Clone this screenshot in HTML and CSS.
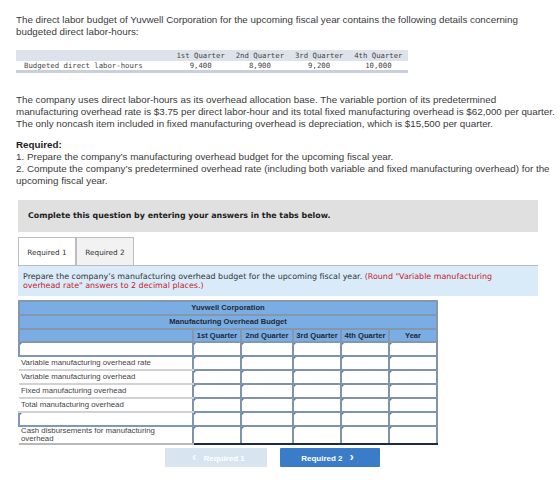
FILE: index.html
```html
<!DOCTYPE html>
<html lang="en">
<head>
    <meta charset="utf-8">
    <title>Manufacturing overhead budget</title>
    <link rel="stylesheet" href="styles.css">
</head>
<body>
    <div class="page">
        <p class="intro">The direct labor budget of Yuvwell Corporation for the upcoming fiscal year contains the following details concerning<br>budgeted direct labor-hours:</p>

        <table class="given">
            <tr class="given-head">
                <td class="given-label"></td>
                <td>1st Quarter</td>
                <td>2nd Quarter</td>
                <td>3rd Quarter</td>
                <td>4th Quarter</td>
            </tr>
            <tr class="given-row">
                <td class="given-label">Budgeted direct labor-hours</td>
                <td>9,400</td>
                <td>8,900</td>
                <td>9,200</td>
                <td>10,000</td>
            </tr>
        </table>

        <p class="intro para2">The company uses direct labor-hours as its overhead allocation base. The variable portion of its predetermined<br>manufacturing overhead rate is $3.75 per direct labor-hour and its total fixed manufacturing overhead is $62,000 per quarter.<br>The only noncash item included in fixed manufacturing overhead is depreciation, which is $15,500 per quarter.</p>

        <div class="required">
            <strong>Required:</strong><br>
            1. Prepare the company’s manufacturing overhead budget for the upcoming fiscal year.<br>
            2. Compute the company’s predetermined overhead rate (including both variable and fixed manufacturing overhead) for the<br>upcoming fiscal year.
        </div>
    </div>

    <div class="answer">
        <div class="complete">Complete this question by entering your answers in the tabs below.</div>

        <div class="tabs">
            <div class="tab active">Required 1</div>
            <div class="tab">Required 2</div>
        </div>

        <div class="instruct">Prepare the company’s manufacturing overhead budget for the upcoming fiscal year. <span class="red">(Round "Variable manufacturing<br>overhead rate" answers to 2 decimal places.)</span></div>

        <table class="budget">
            <colgroup>
                <col class="c-lbl">
                <col class="c-q"><col class="c-q2"><col class="c-q"><col class="c-q"><col class="c-q">
            </colgroup>
            <tr class="hd"><th colspan="6">Yuvwell Corporation</th></tr>
            <tr class="hd"><th colspan="6">Manufacturing Overhead Budget</th></tr>
            <tr class="hd cols">
                <th></th>
                <th>1st Quarter</th>
                <th>2nd Quarter</th>
                <th>3rd Quarter</th>
                <th>4th Quarter</th>
                <th>Year</th>
            </tr>
            <tr>
                <td class="in lbl-in"></td>
                <td class="in"></td><td class="in"></td><td class="in"></td><td class="in"></td><td class="in"></td>
            </tr>
            <tr>
                <td class="lbl">Variable manufacturing overhead rate</td>
                <td class="in"></td><td class="in"></td><td class="in"></td><td class="in"></td><td class="in"></td>
            </tr>
            <tr class="dark">
                <td class="lbl">Variable manufacturing overhead</td>
                <td class="in"></td><td class="in"></td><td class="in"></td><td class="in"></td><td class="in"></td>
            </tr>
            <tr>
                <td class="lbl">Fixed manufacturing overhead</td>
                <td class="in"></td><td class="in"></td><td class="in"></td><td class="in"></td><td class="in"></td>
            </tr>
            <tr class="dark">
                <td class="lbl">Total manufacturing overhead</td>
                <td class="in"></td><td class="in"></td><td class="in"></td><td class="in"></td><td class="in"></td>
            </tr>
            <tr>
                <td class="in lbl-in"></td>
                <td class="in"></td><td class="in"></td><td class="in"></td><td class="in"></td><td class="in"></td>
            </tr>
            <tr class="dark last">
                <td class="lbl two">Cash disbursements for manufacturing overhead</td>
                <td class="in"></td><td class="in"></td><td class="in"></td><td class="in"></td><td class="in"></td>
            </tr>
        </table>

        <div class="nav">
            <div class="btn prev"><span class="chev">&lsaquo;</span> Required 1</div>
            <div class="btn next">Required 2 <span class="chev">&rsaquo;</span></div>
        </div>
    </div>
</body>
</html>
```

FILE: styles.css
```css
body {
    margin: 0;
    background: #fff;
    color: #3a3a3a;
    font-family: "Liberation Sans", Arial, sans-serif;
}

.page {
    padding: 0 0 0 16px;
}

.intro {
    margin: 14px 0 0;
    font-size: 9.8px;
    line-height: 12px;
    white-space: nowrap;
}

.para2 {
    margin-top: 21px;
}

/* given data */
.given {
    margin-top: 12px;
    border-collapse: collapse;
    width: 392px;
    font-family: "DejaVu Sans Mono", monospace;
    font-size: 7.3px;
    color: #444;
    border-bottom: 3px solid #c9d0da;
}

.given td {
    width: 60px;
    text-align: center;
    padding: 0;
}

.given-head td {
    height: 11px;
    line-height: 11px;
}

.given-row td {
    height: 9px;
    line-height: 9px;
}

.given td.given-label {
    width: 150px;
    text-align: left;
    padding-left: 8px;
}

.given-head {
    background: #dde3eb;
}

.required {
    margin-top: 9px;
    font-size: 9.8px;
    line-height: 12px;
    white-space: nowrap;
}

.required strong {
    color: #222;
}

/* answer area */
.answer {
    padding: 0 22px 0 18px;
}

.complete {
    margin-top: 13px;
    background: #e0e0e0;
    height: 32px;
    line-height: 31px;
    padding-left: 10px;
    font-family: "DejaVu Sans", Verdana, sans-serif;
    font-weight: bold;
    font-size: 7.9px;
    color: #222;
}

.tabs {
    display: flex;
    margin-top: 5px;
}

.tab {
    width: 56px;
    height: 27px;
    line-height: 29px;
    text-align: center;
    font-family: "DejaVu Sans", Verdana, sans-serif;
    font-size: 7.3px;
    color: #333;
    background: #f2f2f2;
    border: 1px solid #bdbdbd;
    border-bottom: none;
}

.tab.active {
    background: #fff;
}

.instruct {
    background: #d9ebf8;
    border-top: 1px solid #b5bcc4;
    padding: 6px 5px 6px;
    font-family: "DejaVu Sans", Verdana, sans-serif;
    font-size: 7.95px;
    line-height: 9px;
    color: #333;
    white-space: nowrap;
}

.red {
    color: #c8202a;
}

/* budget table */
.budget {
    margin-top: 4px;
    border-collapse: collapse;
    table-layout: fixed;
    width: 419px;
    font-family: "Liberation Sans", Arial, sans-serif;
    font-size: 7.8px;
}

.c-lbl { width: 174px; }
.c-q { width: 48px; }
.c-q2 { width: 52px; }

.budget th {
    background: #79ade3;
    border: 2px solid #8497ad;
    height: 10px;
    line-height: 10px;
    padding: 1px 0;
    font-weight: bold;
    color: #1e2a36;
    font-size: 7.6px;
    white-space: nowrap;
    overflow: hidden;
}

.budget tr.cols th {
    height: 9px;
    line-height: 9px;
}

.budget td {
    height: 10px;
    line-height: 10px;
    padding: 1px 2px;
    color: #444;
}

.budget td.lbl {
    border-bottom: 2px solid #d2d2d2;
    padding-right: 30px;
}

.budget td.two {
    line-height: 8px;
    height: 16px;
    padding-top: 0;
    padding-bottom: 0;
}

.budget td.in {
    position: relative;
    background: #fff;
    border: 2px solid #8193ab;
}

.budget td.in::before {
    content: "";
    position: absolute;
    left: 0;
    top: 0;
    border-top: 2px solid #3f7fd0;
    border-right: 2px solid transparent;
}

.budget td.lbl-in {
    border-color: #7f97b8;
}

.budget tr.dark td.in {
    border-top-color: #213a5c;
}

.budget tr.last td.in {
    border-bottom-color: #1c2c40;
}

.budget tr.last td.lbl {
    border-bottom: 2px solid #b8b8b8;
}

/* navigation */
.nav {
    display: flex;
    gap: 13px;
    margin-top: 3px;
    padding-left: 147px;
}

.btn {
    width: 102px;
    height: 19px;
    line-height: 19px;
    text-align: center;
    font-size: 8px;
    font-weight: bold;
    color: #fff;
    border-radius: 1px;
}

.btn.prev {
    background: #d9e4f1;
}

.btn.next {
    width: 100px;
    background: #3b7cc9;
}

.chev {
    font-size: 12px;
    padding: 0 5px;
}
```
